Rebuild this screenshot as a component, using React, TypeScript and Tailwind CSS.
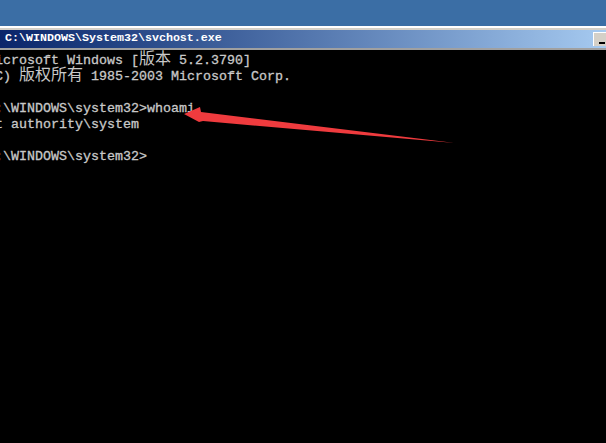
function Cjk({ children }: { children: string }) {
  return <span className="font-['Noto_Sans_CJK_SC'] font-normal text-[16px] leading-[0] [-webkit-text-stroke:0]">{children}</span>
}

function Line({ children }: { children?: React.ReactNode }) {
  return <div className="h-4 leading-4 whitespace-pre">{children}</div>
}

export default function App() {
  return (
    <div className="relative w-[606px] h-[443px] overflow-hidden bg-black flex flex-col">
      {/* desktop behind the window */}
      <div className="h-[26px] shrink-0 bg-[#3b6ea5]" />
      <div className="h-[4px] shrink-0 bg-[#d4d0c8] border-t-2 border-white" />

      {/* title bar */}
      <div className="h-[18px] shrink-0 flex items-center justify-between bg-gradient-to-r from-[#0a246a] to-[#a6caf0]">
        <span className="pl-[5px] font-['Liberation_Mono'] font-bold text-[11.67px] text-white whitespace-pre">
          C:\WINDOWS\System32\svchost.exe
        </span>
        <div className="w-[16px] h-[14px] mr-[-3px] bg-[#d4d0c8] border-t border-l border-white flex items-end justify-center pb-[2px]">
          <div className="w-[6px] h-[2px] bg-black" />
        </div>
      </div>
      <div className="h-[2px] shrink-0 bg-[#a0a0a0]" />

      {/* console */}
      <div className="flex-1 ml-[-13px] pt-[3px] font-['Liberation_Mono'] text-[13.33px] text-[#c8c8c8] [-webkit-text-stroke:0.3px_#c8c8c8]">
        <Line>Microsoft Windows [<Cjk>版本</Cjk> 5.2.3790]</Line>
        <Line>(C) <Cjk>版权所有</Cjk> 1985-2003 Microsoft Corp.</Line>
        <Line />
        <Line>C:\WINDOWS\system32&gt;whoami</Line>
        <Line>nt authority\system</Line>
        <Line />
        <Line>C:\WINDOWS\system32&gt;</Line>
      </div>

      {/* red annotation arrow */}
      <svg className="absolute left-0 top-0" width="606" height="443" viewBox="0 0 606 443">
        <polygon points="184,114 200,107 201,112 455,143 203,121 199,122" fill="#ef3b3e" />
      </svg>
    </div>
  )
}
